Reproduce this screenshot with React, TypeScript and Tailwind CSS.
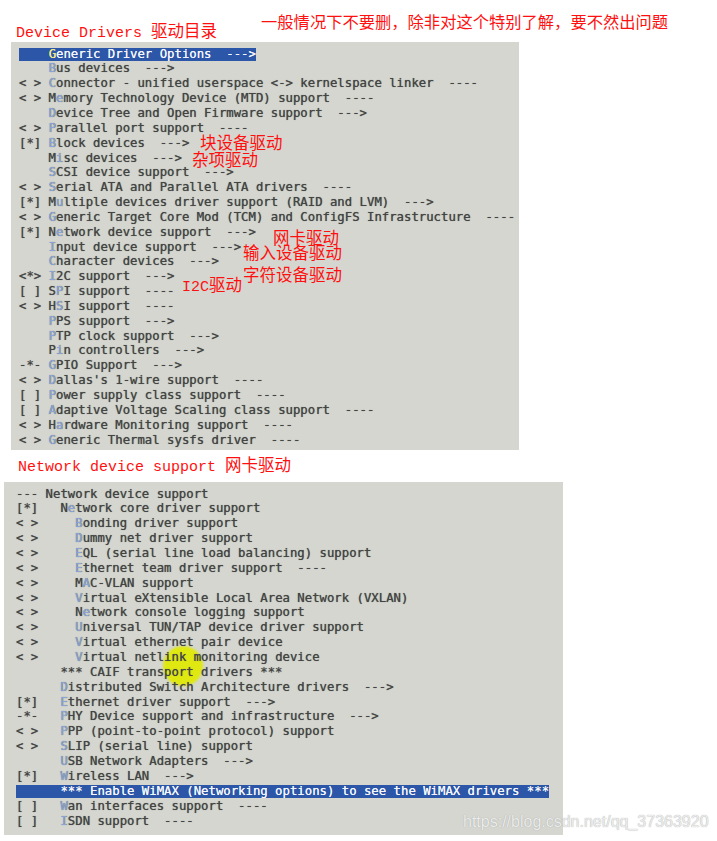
import React from "react";

type RowDef = [string, number, boolean?];

const topRows: RowDef[] = [
  ["    Generic Driver Options  --->", 4, true],
  ["    Bus devices  --->", 4],
  ["< > Connector - unified userspace <-> kernelspace linker  ----", 4],
  ["< > Memory Technology Device (MTD) support  ----", 5],
  ["    Device Tree and Open Firmware support  --->", 4],
  ["< > Parallel port support  ----", 4],
  ["[*] Block devices  --->", 4],
  ["    Misc devices  --->", 5],
  ["    SCSI device support  --->", 4],
  ["< > Serial ATA and Parallel ATA drivers  ----", 4],
  ["[*] Multiple devices driver support (RAID and LVM)  --->", 5],
  ["< > Generic Target Core Mod (TCM) and ConfigFS Infrastructure  ----", 4],
  ["[*] Network device support  --->", 5],
  ["    Input device support  --->", 4],
  ["    Character devices  --->", 4],
  ["<*> I2C support  --->", 4],
  ["[ ] SPI support  ----", 5],
  ["< > HSI support  ----", 5],
  ["    PPS support  --->", 4],
  ["    PTP clock support  --->", 4],
  ["    Pin controllers  --->", 5],
  ["-*- GPIO Support  --->", 4],
  ["< > Dallas's 1-wire support  ----", 4],
  ["[ ] Power supply class support  ----", 4],
  ["[ ] Adaptive Voltage Scaling class support  ----", 4],
  ["< > Hardware Monitoring support  ----", 5],
  ["< > Generic Thermal sysfs driver  ----", 4],
];

const bottomRows: RowDef[] = [
  ["--- Network device support", -1],
  ["[*]   Network core driver support", 7],
  ["< >     Bonding driver support", 8],
  ["< >     Dummy net driver support", 8],
  ["< >     EQL (serial line load balancing) support", 8],
  ["< >     Ethernet team driver support  ----", 8],
  ["< >     MAC-VLAN support", 9],
  ["< >     Virtual eXtensible Local Area Network (VXLAN)", 8],
  ["< >     Network console logging support", 9],
  ["< >     Universal TUN/TAP device driver support", 8],
  ["< >     Virtual ethernet pair device", 8],
  ["< >     Virtual netlink monitoring device", 8],
  ["      *** CAIF transport drivers ***", -1],
  ["      Distributed Switch Architecture drivers  --->", 6],
  ["[*]   Ethernet driver support  --->", 6],
  ["-*-   PHY Device support and infrastructure  --->", 6],
  ["< >   PPP (point-to-point protocol) support", 6],
  ["< >   SLIP (serial line) support", 6],
  ["      USB Network Adapters  --->", 6],
  ["[*]   Wireless LAN  --->", 6],
  ["      *** Enable WiMAX (Networking options) to see the WiMAX drivers ***", -1, true],
  ["[ ]   Wan interfaces support  ----", 6],
  ["[ ]   ISDN support  ----", 6],
];

function Row({ def, lh }: { def: RowDef; lh: string }) {
  const [text, hk, hl] = def;
  const inner =
    hk >= 0 ? (
      <>
        {text.slice(0, hk)}
        <span className={hl ? "text-[#f2e86a]" : "text-[#8aa4d8]"}>{text[hk]}</span>
        {text.slice(hk + 1)}
      </>
    ) : (
      text
    );
  return (
    <div className={`${lh} whitespace-pre`}>
      {hl ? (
        <span className="inline-block bg-[#2c56a8] text-[#f4f6fb] h-[13.5px] leading-[13.5px] [text-shadow:0_0_0.6px_#ffffff]">
          {inner}
        </span>
      ) : (
        inner
      )}
    </div>
  );
}

const monoStack = "font-['DejaVu_Sans_Mono','Liberation_Mono',monospace]";
const redMono = "font-['Liberation_Mono','Noto_Sans_CJK_SC',monospace]";
const cjk = "font-['Noto_Sans_CJK_SC',sans-serif]";

function Note({ latin, zh, className }: { latin?: string; zh: string; className: string }) {
  return (
    <div className={`absolute text-[#ff1010] leading-[20px] whitespace-nowrap ${className}`}>
      {latin && <span className={`${redMono} text-[15px]`}>{latin}</span>}
      <span className={`${cjk} text-[16.5px]`}>{zh}</span>
    </div>
  );
}

export default function App() {
  return (
    <div className="relative w-[717px] h-[841px] bg-white overflow-hidden">
      {/* header */}
      <div className="flex items-start h-[42px] pl-[16px]">
        <div className="mt-[20px] leading-[20px] text-[#ff1010] whitespace-pre">
          <span className={`${redMono} text-[15px]`}>Device Drivers </span>
          <span className={`${cjk} text-[16.5px]`}>驱动目录</span>
        </div>
        <div className={`ml-[44px] mt-[11px] leading-[20px] text-[#ff1010] ${cjk} text-[16.3px] whitespace-nowrap`}>
          一般情况下不要删，除非对这个特别了解，要不然出问题
        </div>
      </div>

      {/* top panel */}
      <div
        className={`ml-[11px] w-[508px] h-[408px] bg-[#d4d6cf] pt-[4.6px] pl-[8px] text-[12.3px] text-[#444444] [text-shadow:0_0_0.7px_#555555] ${monoStack}`}
      >
        {topRows.map((r, i) => (
          <Row key={i} def={r} lh="h-[14.85px] leading-[14.85px]" />
        ))}
      </div>

      {/* second title */}
      <div className="h-[32px] flex items-center pl-[18px] text-[#ff1010]">
        <div className="whitespace-pre leading-[20px]">
          <span className={`${redMono} text-[15px]`}>Network device support </span>
          <span className={`${cjk} text-[16.5px]`}>网卡驱动</span>
        </div>
      </div>

      {/* bottom panel */}
      <div
        className={`relative isolate ml-[4px] w-[559px] h-[353px] bg-[#d4d6cf] pt-[4.6px] pl-[12px] text-[12.3px] text-[#444444] [text-shadow:0_0_0.7px_#555555] ${monoStack}`}
      >
        {/* cursor highlight, painted under the text */}
        <div className="absolute -z-10 left-[159px] top-[164px] w-[40px] h-[40px] rounded-full bg-[#e0e812] blur-[0.8px]" />
        {bottomRows.map((r, i) => (
          <Row key={i} def={r} lh="h-[14.86px] leading-[14.86px]" />
        ))}
      </div>

      {/* red annotations */}
      <Note zh="块设备驱动" className="left-[200px] top-[132px]" />
      <Note zh="杂项驱动" className="left-[192px] top-[149px]" />
      <Note zh="网卡驱动" className="left-[273px] top-[227px]" />
      <Note zh="输入设备驱动" className="left-[243px] top-[242px]" />
      <Note zh="字符设备驱动" className="left-[243px] top-[264px]" />
      <Note latin="I2C" zh="驱动" className="left-[182px] top-[274px]" />

      {/* watermark */}
      <div className="absolute left-[463px] top-[811px] leading-[22px] text-[16px] font-['Liberation_Sans',Arial,sans-serif] text-[#ececec] [text-shadow:0_0_1px_#9a9a9a] whitespace-nowrap">
        https://blog.csdn.net/qq_37363920
      </div>
    </div>
  );
}
